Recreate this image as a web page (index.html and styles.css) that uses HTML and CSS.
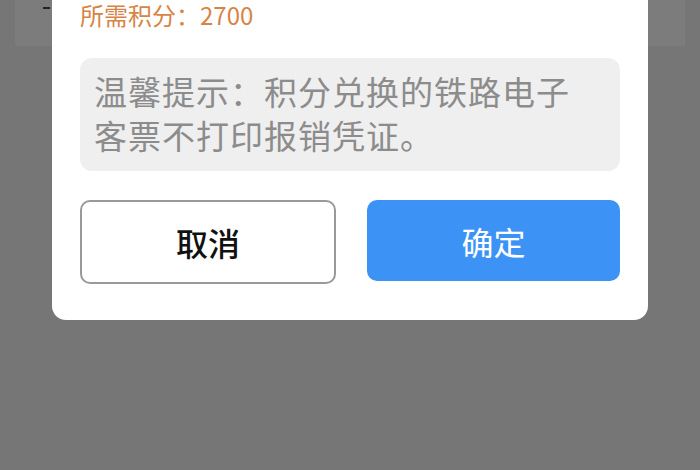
FILE: index.html
```html
<!DOCTYPE html>
<html lang="zh">
<head>
<meta charset="utf-8">
<link rel="stylesheet" href="styles.css">
</head>
<body>
<div class="page">
  <div class="page-card"><span class="dash"></span></div>
</div>
<div class="modal">
  <div class="cost">所需积分：2700</div>
  <div class="hint">温馨提示：积分兑换的铁路电子客票不打印报销凭证。</div>
  <div class="actions">
    <button class="btn btn-cancel">取消</button>
    <button class="btn btn-ok">确定</button>
  </div>
</div>
</body>
</html>
```
FILE: styles.css
```css
html, body {
  margin: 0;
  padding: 0;
}
body {
  width: 700px;
  height: 470px;
  background: #767676;
  overflow: hidden;
  position: relative;
  font-family: "Noto Sans CJK SC", "Noto Sans", sans-serif;
}
.page {
  padding: 0 15px;
}
.page-card {
  height: 46px;
  background: #7c7c7c;
  position: relative;
}
.dash {
  position: absolute;
  left: 28px;
  top: 7px;
  width: 7px;
  height: 2px;
  background: #222;
}
.modal {
  position: absolute;
  left: 52px;
  top: -40px;
  width: 596px;
  box-sizing: border-box;
  background: #fff;
  border-radius: 14px;
  padding: 42px 28px 36px;
}
.cost {
  color: #d88446;
  font-size: 24px;
  line-height: 26px;
}
.hint {
  margin-top: 30px;
  background: #efefef;
  border-radius: 12px;
  color: #8c8c8c;
  font-size: 33px;
  line-height: 44px;
  padding: 11px 40px 14px 14px;
  letter-spacing: 1px;
}
.actions {
  margin-top: 29px;
  display: flex;
  gap: 31px;
}
.btn {
  flex: 1;
  height: 84px;
  border-radius: 10px;
  font-family: "Noto Sans CJK SC", sans-serif;
  font-size: 32px;
  padding: 0;
}
.btn-cancel {
  background: #fff;
  border: 2px solid #9a9a9a;
  color: #111;
  font-weight: 500;
  flex: 0 0 256px;
}
.btn-ok {
  background: #3d93f5;
  border: none;
  color: #fff;
  height: 81px;
}
```
